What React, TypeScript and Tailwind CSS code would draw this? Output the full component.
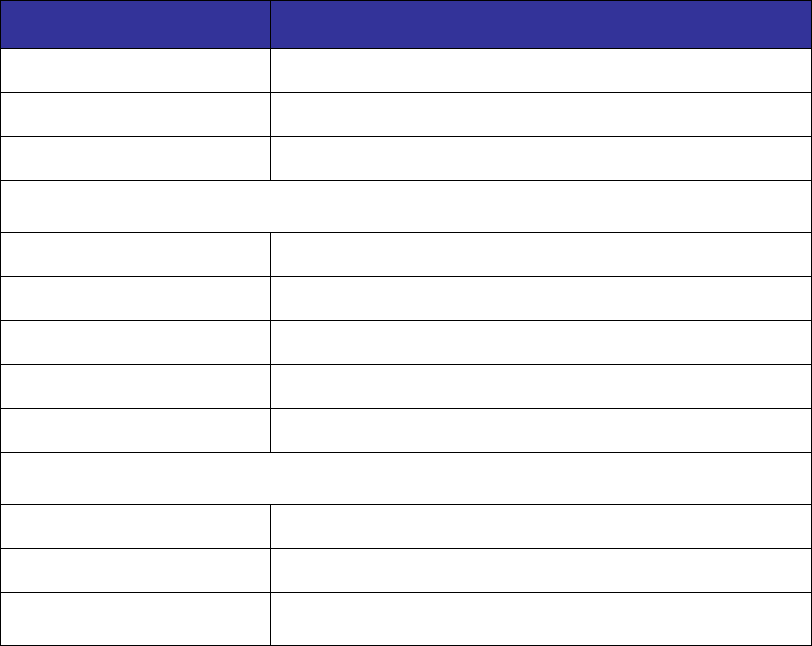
const rowsA = [0, 1, 2];
const rowsB = [0, 1, 2, 3, 4];
const rowsC = [0, 1];

const Row = ({ tall }: { tall?: boolean }) => (
  <tr className={tall ? 'h-[53px]' : 'h-[44px]'}>
    <td className="w-[270px] border border-black p-0"></td>
    <td className="border border-black p-0"></td>
  </tr>
);

const SectionRow = () => (
  <tr className="h-[52px]">
    <td colSpan={2} className="border border-black p-0"></td>
  </tr>
);

export default function App() {
  return (
    <div className="w-[812px] h-[646px] bg-white" style={{ fontFamily: '"Liberation Sans", Arial, sans-serif' }}>
      <table className="w-[812px] border-collapse table-fixed">
        <thead>
          <tr className="h-[48px] bg-[#333399]">
            <th className="w-[270px] border border-black p-0"></th>
            <th className="border border-black p-0"></th>
          </tr>
        </thead>
        <tbody>
          {rowsA.map((r) => (
            <Row key={`a${r}`} />
          ))}
          <SectionRow />
          {rowsB.map((r) => (
            <Row key={`b${r}`} />
          ))}
          <SectionRow />
          {rowsC.map((r) => (
            <Row key={`c${r}`} />
          ))}
          <Row tall />
        </tbody>
      </table>
    </div>
  );
}
